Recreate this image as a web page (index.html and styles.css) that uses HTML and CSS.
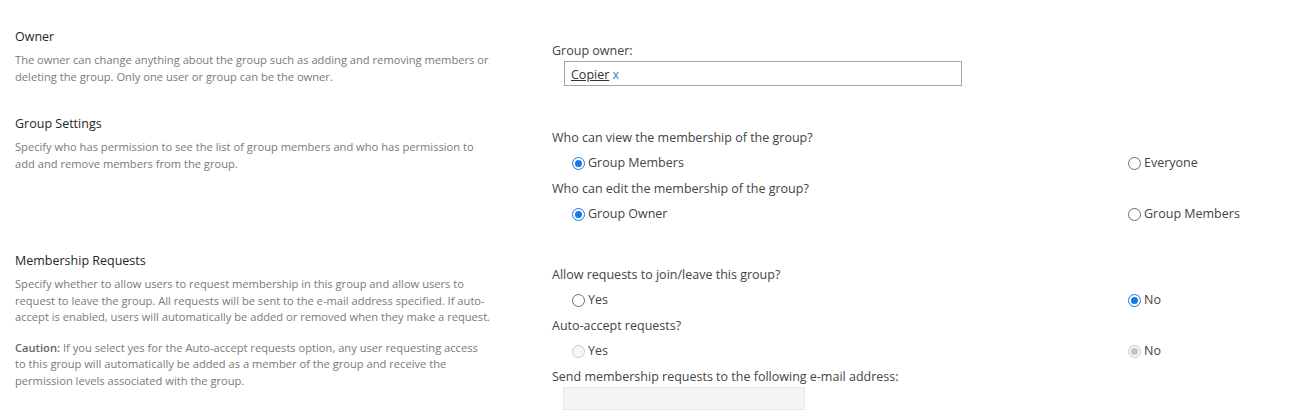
FILE: index.html
```html
<!DOCTYPE html>
<html lang="en">
<head>
<meta charset="utf-8">
<title>Group settings</title>
<link rel="stylesheet" href="styles.css">
</head>
<body>
<div class="page">
  <section class="section s1">
    <div class="info">
      <h3 class="title">Owner</h3>
      <p class="desc">The owner can change anything about the group such as adding and removing members or deleting the group. Only one user or group can be the owner.</p>
    </div>
    <div class="fields">
      <div class="label">Group owner:</div>
      <div class="people"><a class="person" href="#">Copier</a> <span class="remove">x</span></div>
    </div>
  </section>

  <section class="section s2">
    <div class="info">
      <h3 class="title">Group Settings</h3>
      <p class="desc">Specify who has permission to see the list of group members and who has permission to add and remove members from the group.</p>
    </div>
    <div class="fields">
      <div class="label">Who can view the membership of the group?</div>
      <div class="options">
        <label class="opt"><input type="radio" name="view" checked><span>Group Members</span></label>
        <label class="opt"><input type="radio" name="view"><span>Everyone</span></label>
      </div>
      <div class="label">Who can edit the membership of the group?</div>
      <div class="options">
        <label class="opt"><input type="radio" name="edit" checked><span>Group Owner</span></label>
        <label class="opt"><input type="radio" name="edit"><span>Group Members</span></label>
      </div>
    </div>
  </section>

  <section class="section s3">
    <div class="info">
      <h3 class="title">Membership Requests</h3>
      <p class="desc">Specify whether to allow users to request membership in this group and allow users to request to leave the group. All requests will be sent to the e-mail address specified. If auto-accept is enabled, users will automatically be added or removed when they make a request.</p>
      <p class="desc caution"><b>Caution:</b> If you select yes for the Auto-accept requests option, any user requesting access to this group will automatically be added as a member of the group and receive the permission levels associated with the group.</p>
    </div>
    <div class="fields">
      <div class="label">Allow requests to join/leave this group?</div>
      <div class="options">
        <label class="opt"><input type="radio" name="allow"><span>Yes</span></label>
        <label class="opt"><input type="radio" name="allow" checked><span>No</span></label>
      </div>
      <div class="label">Auto-accept requests?</div>
      <div class="options">
        <label class="opt"><input type="radio" name="auto" disabled><span>Yes</span></label>
        <label class="opt"><input type="radio" name="auto" checked disabled><span>No</span></label>
      </div>
      <div class="label">Send membership requests to the following e-mail address:</div>
      <input class="email" type="text" disabled>
    </div>
  </section>
</div>
</body>
</html>
```
FILE: styles.css
```css
* { box-sizing: border-box; }
html, body { margin: 0; padding: 0; background: #fff; }
body {
  font-family: "Open Sans", "Noto Sans", "Liberation Sans", sans-serif;
  color: #444;
  width: 1298px;
  height: 415px;
  overflow: hidden;
}
.page { padding: 28px 0 0 15px; }
.section { display: flex; align-items: flex-start; }
.s2 { margin-top: 29px; }
.s3 { margin-top: 21px; }
.info { width: 537px; }
.title {
  margin: 0;
  font-size: 12.5px;
  font-weight: normal;
  line-height: 18px;
  color: #262626;
}
.desc {
  margin: 6px 0 0;
  width: 476px;
  font-size: 11.15px;
  line-height: 16.6px;
  color: #7a7a7a;
}
.desc.caution { margin-top: 14px; }
.desc b { color: #666; font-weight: 600; }
.fields { flex: 1; padding-top: 14px; }
.label { font-size: 12.5px; line-height: 18px; color: #444; }
.people {
  margin: 1px 0 0 12px;
  width: 398px;
  height: 25px;
  border: 1px solid #a0a89f;
  padding: 1px 6px 0;
  font-size: 12.5px;
  line-height: 23px;
}
.person { color: #333; text-decoration: underline; }
.remove { color: #3d7fc0; }
.options {
  display: grid;
  grid-template-columns: 556px 1fr;
  padding-left: 20px;
  margin: 7px 0 8px;
}
.opt {
  display: flex;
  align-items: center;
  gap: 3px;
  font-size: 12.5px;
  line-height: 18px;
  color: #444;
}
.opt input {
  appearance: none;
  -webkit-appearance: none;
  margin: 0;
  width: 13px;
  height: 13px;
  border: 1px solid #6d6d6d;
  border-radius: 50%;
  background: #fff;
  position: relative;
  flex: none;
}
.opt input:checked { border-color: #1a78e0; }
.opt input:checked::after {
  content: "";
  position: absolute;
  left: 2px; top: 2px;
  width: 7px; height: 7px;
  border-radius: 50%;
  background: #1a78e0;
}
.opt input:disabled { border-color: #c8c8c8; background: #f7f7f7; }
.opt input:disabled:checked::after { background: #c4c4c4; }
.email {
  display: block;
  margin: 1px 0 0 11px;
  width: 242px;
  height: 23px;
  border: 1px dotted #dcdcdc;
  background: #f7f4f8;
}
```
